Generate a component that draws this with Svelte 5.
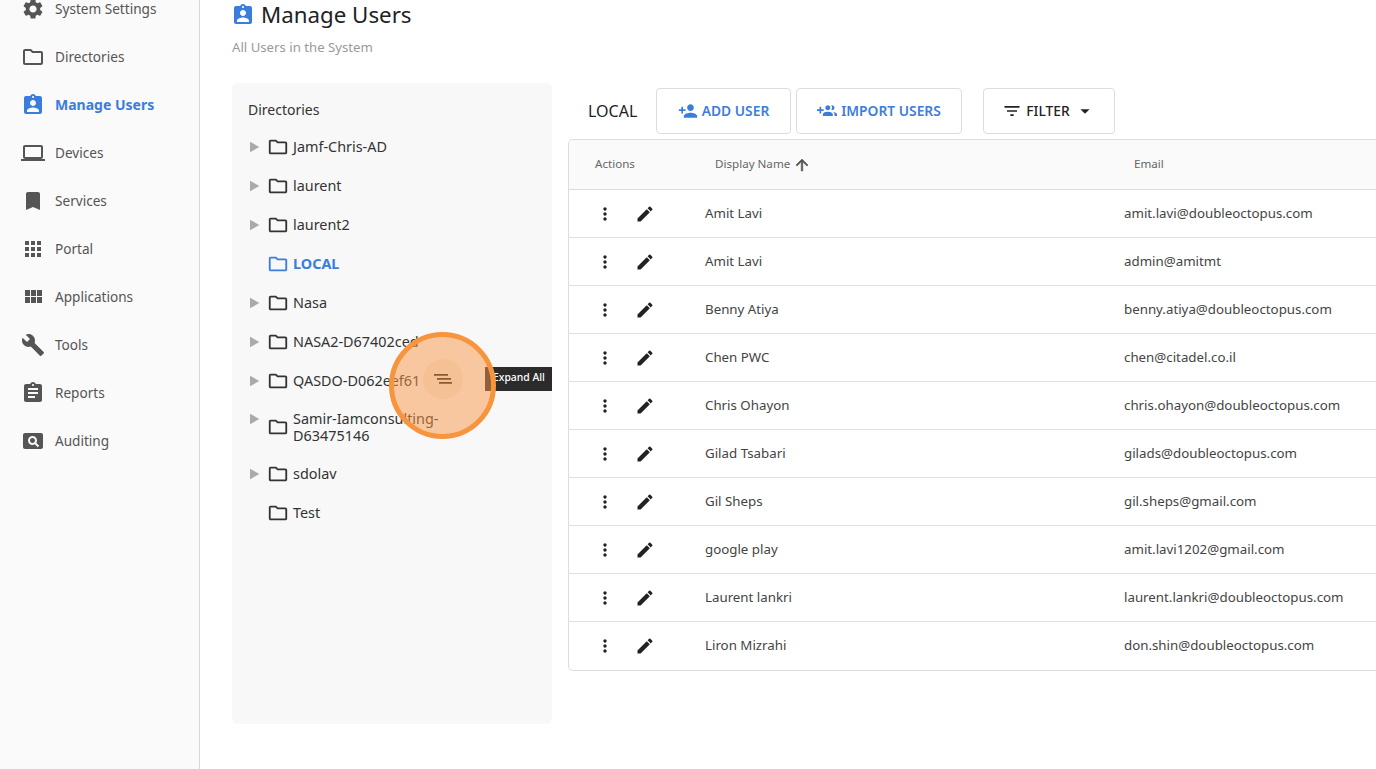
<script>
  const icons = {
    settings: "M19.14 12.94c.04-.3.06-.61.06-.94 0-.32-.02-.64-.07-.94l2.03-1.58c.18-.14.23-.41.12-.61l-1.92-3.32c-.12-.22-.37-.29-.59-.22l-2.39.96c-.5-.38-1.03-.7-1.62-.94l-.36-2.54c-.04-.24-.24-.41-.48-.41h-3.84c-.24 0-.43.17-.47.41l-.36 2.54c-.59.24-1.13.57-1.62.94l-2.39-.96c-.22-.08-.47 0-.59.22L2.74 8.87c-.12.21-.08.47.12.61l2.03 1.58c-.05.3-.09.63-.09.94s.02.64.07.94l-2.03 1.58c-.18.14-.23.41-.12.61l1.92 3.32c.12.22.37.29.59.22l2.39-.96c.5.38 1.03.7 1.62.94l.36 2.54c.05.24.24.41.48.41h3.84c.24 0 .44-.17.47-.41l.36-2.54c.59-.24 1.13-.56 1.62-.94l2.39.96c.22.08.47 0 .59-.22l1.92-3.32c.12-.22.07-.47-.12-.61l-2.01-1.58zM12 15.6c-1.98 0-3.6-1.62-3.6-3.6s1.62-3.6 3.6-3.6 3.6 1.62 3.6 3.6-1.62 3.6-3.6 3.6z",
    folder: "M9.17 6l2 2H20v10H4V6h5.17M10 4H4c-1.1 0-1.99.9-1.99 2L2 18c0 1.1.9 2 2 2h16c1.1 0 2-.9 2-2V8c0-1.1-.9-2-2-2h-8l-2-2z",
    ind: "M19 3h-4.18C14.4 1.84 13.3 1 12 1c-1.3 0-2.4.84-2.82 2H5c-1.1 0-2 .9-2 2v14c0 1.1.9 2 2 2h14c1.1 0 2-.9 2-2V5c0-1.1-.9-2-2-2zm-7 0c.55 0 1 .45 1 1s-.45 1-1 1-1-.45-1-1 .45-1 1-1zm0 4c1.66 0 3 1.34 3 3s-1.34 3-3 3-3-1.34-3-3 1.34-3 3-3zm6 12H6v-1.4c0-2 4-3.1 6-3.1s6 1.1 6 3.1V19z",
    laptop: "M20 18c1.1 0 1.99-.9 1.99-2L22 6c0-1.1-.9-2-2-2H4c-1.1 0-2 .9-2 2v10c0 1.1.9 2 2 2H0v2h24v-2h-4zM4 6h16v10H4V6z",
    bookmark: "M17 3H7c-1.1 0-1.99.9-1.99 2L5 21l7-3 7 3V5c0-1.1-.9-2-2-2z",
    apps: "M4 8h4V4H4v4zm6 12h4v-4h-4v4zm-6 0h4v-4H4v4zm0-6h4v-4H4v4zm6 0h4v-4h-4v4zm6-10v4h4V4h-4zm-6 4h4V4h-4v4zm6 6h4v-4h-4v4zm0 6h4v-4h-4v4z",
    module: "M4 11h5V5H4v6zm0 7h5v-6H4v6zm6 0h5v-6h-5v6zm6 0h5v-6h-5v6zm-6-7h5V5h-5v6zm6-6v6h5V5h-5z",
    build: "M22.7 19l-9.1-9.1c.9-2.3.4-5-1.5-6.9-2-2-5-2.4-7.4-1.3L9 6 6 9 1.6 4.7C.4 7.1.9 10.1 2.9 12.1c1.9 1.9 4.6 2.4 6.9 1.5l9.1 9.1c.4.4 1 .4 1.4 0l2.3-2.3c.5-.4.5-1.1.1-1.4z",
    assignment: "M19 3h-4.18C14.4 1.84 13.3 1 12 1c-1.3 0-2.4.84-2.82 2H5c-1.1 0-2 .9-2 2v14c0 1.1.9 2 2 2h14c1.1 0 2-.9 2-2V5c0-1.1-.9-2-2-2zm-7 0c.55 0 1 .45 1 1s-.45 1-1 1-1-.45-1-1 .45-1 1-1zm2 14H7v-2h7v2zm3-4H7v-2h10v2zm0-4H7V7h10v2z",
    pageview: "M11.5 9C10.12 9 9 10.12 9 11.5s1.12 2.5 2.5 2.5 2.5-1.12 2.5-2.5S12.88 9 11.5 9zM20 4H4c-1.1 0-2 .9-2 2v12c0 1.1.9 2 2 2h16c1.1 0 2-.9 2-2V6c0-1.1-.9-2-2-2zm-3.21 14.21l-2.91-2.91c-.69.44-1.51.7-2.38.7C9 16 7 14 7 11.5S9 7 11.5 7 16 9 16 11.5c0 .88-.26 1.69-.7 2.39l2.91 2.9-1.42 1.42z",
    personAdd: "M15 12c2.21 0 4-1.79 4-4s-1.79-4-4-4-4 1.79-4 4 1.79 4 4 4zm-9-2V7H4v3H1v2h3v3h2v-3h3v-2H6zm9 4c-2.67 0-8 1.34-8 4v2h16v-2c0-2.66-5.33-4-8-4z",
    groupAdd: "M8 10H5V7H3v3H0v2h3v3h2v-3h3v-2zm10 1c1.66 0 2.99-1.34 2.99-3S19.66 5 18 5c-.32 0-.63.05-.91.14.57.81.9 1.79.9 2.86s-.34 2.04-.9 2.86c.28.09.59.14.91.14zm-5 0c1.66 0 2.99-1.34 2.99-3S14.66 5 13 5s-3 1.34-3 3 1.34 3 3 3zm6.62 2.16c.83.73 1.38 1.66 1.38 2.84v2h3v-2c0-1.54-2.37-2.49-4.38-2.84zM13 13c-2 0-6 1-6 3v2h12v-2c0-2-4-3-6-3z",
    filter: "M10 18h4v-2h-4v2zM3 6v2h18V6H3zm3 7h12v-2H6v2z",
    up: "M4 12l1.41 1.41L11 7.83V20h2V7.83l5.58 5.59L20 12l-8-8-8 8z",
    more: "M12 8c1.1 0 2-.9 2-2s-.9-2-2-2-2 .9-2 2 .9 2 2 2zm0 2c-1.1 0-2 .9-2 2s.9 2 2 2 2-.9 2-2-.9-2-2-2zm0 6c-1.1 0-2 .9-2 2s.9 2 2 2 2-.9 2-2-.9-2-2-2z",
    edit: "M3 17.25V21h3.75L17.81 9.94l-3.75-3.75L3 17.25zM20.71 7.04c.39-.39.39-1.02 0-1.41l-2.34-2.34c-.39-.39-1.02-.39-1.41 0l-1.83 1.83 3.75 3.75 1.83-1.83z",
    drop: "M7 10l5 5 5-5z",
    tri: "M6 4v16l14-8z"
  };
  const nav = [
    ["System Settings", "settings"], ["Directories", "folder"], ["Manage Users", "ind", true],
    ["Devices", "laptop"], ["Services", "bookmark"], ["Portal", "apps"], ["Applications", "module"],
    ["Tools", "build"], ["Reports", "assignment"], ["Auditing", "pageview"]
  ];
  const tree = [
    { t: "Jamf-Chris-AD", c: true }, { t: "laurent", c: true }, { t: "laurent2", c: true },
    { t: "LOCAL", active: true }, { t: "Nasa", c: true }, { t: "NASA2-D67402ced", c: true },
    { t: "QASDO-D062eef61", c: true }, { t: "Samir-Iamconsulting-D63475146", c: true, two: true },
    { t: "sdolav", c: true }, { t: "Test" }
  ];
  const users = [
    ["Amit Lavi", "amit.lavi@doubleoctopus.com"], ["Amit Lavi", "admin@amitmt"],
    ["Benny Atiya", "benny.atiya@doubleoctopus.com"], ["Chen PWC", "chen@citadel.co.il"],
    ["Chris Ohayon", "chris.ohayon@doubleoctopus.com"], ["Gilad Tsabari", "gilads@doubleoctopus.com"],
    ["Gil Sheps", "gil.sheps@gmail.com"], ["google play", "amit.lavi1202@gmail.com"],
    ["Laurent lankri", "laurent.lankri@doubleoctopus.com"], ["Liron Mizrahi", "don.shin@doubleoctopus.com"]
  ];
</script>

{#snippet icon(name, cls)}
  <svg class={cls} viewBox="0 0 24 24" aria-hidden="true"><path d={icons[name]} /></svg>
{/snippet}

<div class="page">
  <aside class="side">
    <nav class="nav">
      {#each nav as [label, ic, active]}
        <div class="nav-item" class:active>
          {@render icon(ic, "nav-ic")}
          <span>{label}</span>
        </div>
      {/each}
    </nav>
  </aside>

  <main class="main">
    <header class="head">
      <h1>{@render icon("ind", "title-ic")}<span>Manage Users</span></h1>
      <p>All Users in the System</p>
    </header>

    <div class="cols">
      <section class="panel">
        <div class="panel-title">Directories</div>
        <ul class="tree">
          {#each tree as d}
            <li class="node" class:active={d.active} class:two={d.two}>
              <span class="caret">{#if d.c}{@render icon("tri", "tri-ic")}{/if}</span>
              {@render icon("folder", "folder-ic")}
              <span class="node-label">{d.t}</span>
            </li>
          {/each}
        </ul>
      </section>

      <section class="content">
        <div class="toolbar">
          <span class="crumb">LOCAL</span>
          <button class="btn primary add">{@render icon("personAdd", "btn-ic")}<span>ADD USER</span></button>
          <button class="btn primary imp">{@render icon("groupAdd", "btn-ic")}<span>IMPORT USERS</span></button>
          <button class="btn filter">{@render icon("filter", "btn-ic")}<span>FILTER</span>{@render icon("drop", "drop-ic")}</button>
        </div>

        <div class="table">
          <div class="row th">
            <div class="c-act"><span>Actions</span></div>
            <div class="c-name"><span>Display Name</span>{@render icon("up", "up-ic")}</div>
            <div class="c-mail"><span>Email</span></div>
          </div>
          {#each users as [name, mail]}
            <div class="row td">
              <div class="c-act">
                {@render icon("more", "act-ic")}
                {@render icon("edit", "act-ic")}
              </div>
              <div class="c-name"><span>{name}</span></div>
              <div class="c-mail"><span>{mail}</span></div>
            </div>
          {/each}
        </div>
      </section>
    </div>
  </main>

  <div class="tip">Expand All</div>
  <div class="spot">
    <div class="spot-inner">
      <svg viewBox="0 0 18 10" class="spot-ic" aria-hidden="true"><path d="M0 0h14v1.7H0zM3 4h14v1.7H3zM5 8h13v1.7H5z" /></svg>
    </div>
  </div>
</div>

<style>
  :global(body) { margin: 0; background: #fff; }
  .page {
    position: relative;
    display: flex;
    width: 1376px;
    height: 769px;
    overflow: hidden;
    font-family: "Noto Sans", "Open Sans", sans-serif;
    font-size: 14px;
    color: #3a3a3a;
  }
  svg { fill: currentColor; display: block; flex: none; }

  .side { flex: none; width: 199px; background: #fafafa; border-right: 1px solid #d9d9d9; }
  .nav { margin-top: -15px; }
  .nav-item { display: flex; align-items: center; height: 48px; padding-left: 21px; gap: 10px; color: #555; font-size: 13.6px; }
  .nav-item span { padding-bottom: 2px; }
  .nav-item.active { color: #3b7ddd; font-weight: 700; font-size: 14px; }
  :global(.nav-ic) { width: 24px; height: 24px; }

  .main { flex: 1; min-width: 0; padding-left: 32px; }
  .head { height: 83px; }
  h1 {
    margin: 0;
    height: 30px;
    display: flex;
    align-items: center;
    font-size: 22.3px;
    font-weight: 400;
    color: #222;
  }
  h1 span { padding-bottom: 2px; }
  :global(.title-ic) { width: 24px; height: 24px; margin: 0 6px 0 -1px; color: #3b7ddd; }
  .head p { margin: 8px 0 0; font-size: 13.2px; line-height: 18px; color: #9a9a9a; }

  .cols { display: flex; gap: 16px; }
  .panel { flex: none; width: 320px; height: 641px; box-sizing: border-box; background: #f8f8f8; border-radius: 6px; padding: 18px 16px 0; }
  .panel-title { line-height: 18px; margin-bottom: 8px; color: #333; }
  .tree { list-style: none; margin: 0; padding: 0; }
  .node { display: flex; align-items: center; height: 39px; color: #333; font-size: 14.4px; }
  .node.two { height: 54px; }
  .node.two .node-label { width: 150px; line-height: 17px; }
  .node.active { color: #3b7ddd; font-weight: 700; }
  .caret { width: 19px; flex: none; color: #aaa; }
  .two .caret { align-self: flex-start; padding-top: 11px; }
  :global(.tri-ic) { width: 16px; height: 16px; margin-left: -2px; }
  :global(.folder-ic) { width: 22px; height: 22px; margin-right: 4px; }

  .content { flex: none; width: 900px; }
  .toolbar { display: flex; align-items: center; height: 46px; margin: 5px 0 5px; }
  .crumb { width: 88px; padding-left: 20px; box-sizing: border-box; font-size: 16px; color: #222; }
  .btn {
    display: flex;
    align-items: center;
    justify-content: center;
    height: 46px;
    box-sizing: border-box;
    background: #fff;
    border: 1px solid #ddd;
    border-radius: 4px;
    font: inherit;
    font-size: 13.8px;
    font-weight: 600;
    padding: 0;
  }
  .btn span { padding-bottom: 2px; }
  .primary { color: #3b7ddd; }
  .add { width: 135px; margin-right: 5px; }
  .imp { width: 166px; margin-right: 21px; }
  .filter { width: 132px; color: #222; font-weight: 500; }
  :global(.btn-ic) { width: 20px; height: 20px; margin-right: 4px; }
  :global(.drop-ic) { width: 22px; height: 22px; margin-left: 4px; }

  .table { box-sizing: border-box; width: 900px; border: 1px solid #ddd; border-right: 0; border-radius: 5px 0 0 5px; overflow: hidden; font-size: 13.3px; }
  .row { display: flex; align-items: center; box-sizing: border-box; height: 48px; }
  .th { height: 50px; border-bottom: 1px solid #ddd; background: #fafafa; font-size: 11.6px; color: #666; }
  .td { border-bottom: 1px solid #e2e2e2; }
  .td:last-child { border-bottom: 0; }
  .row span { padding-bottom: 2px; }
  .c-act { flex: none; width: 136px; display: flex; align-items: center; gap: 20px; padding-left: 26px; box-sizing: border-box; color: #222; }
  .c-name { flex: none; width: 419px; display: flex; align-items: center; color: #444; }
  .th .c-name { padding-left: 10px; box-sizing: border-box; color: #666; }
  .c-mail { display: flex; align-items: center; color: #444; }
  .th .c-act, .th .c-mail { color: #666; }
  .th .c-mail { padding-left: 10px; }
  :global(.act-ic) { width: 20px; height: 20px; }
  :global(.up-ic) { width: 18px; height: 18px; margin-left: 3px; color: #555; stroke: #555; stroke-width: 0.8; }

  .tip {
    position: absolute;
    left: 485px;
    top: 367px;
    width: 67px;
    height: 24px;
    box-sizing: border-box;
    padding-left: 8px;
    background: #2b2b2b;
    color: #fff;
    font-size: 10.4px;
    font-weight: 500;
    line-height: 21px;
    white-space: nowrap;
  }
  .spot {
    position: absolute;
    left: 389px;
    top: 332px;
    width: 107px;
    height: 107px;
    box-sizing: border-box;
    border-radius: 50%;
    border: 5px solid #f7943e;
    background: rgba(248, 150, 70, 0.5);
  }
  .spot-inner {
    width: 40px;
    height: 40px;
    margin: 22px 0 0 29px;
    border-radius: 50%;
    background: rgba(235, 150, 90, 0.14);
    display: flex;
    align-items: center;
    justify-content: center;
  }
  .spot-ic { width: 18px; height: 10px; fill: #8a5a30; }
</style>
